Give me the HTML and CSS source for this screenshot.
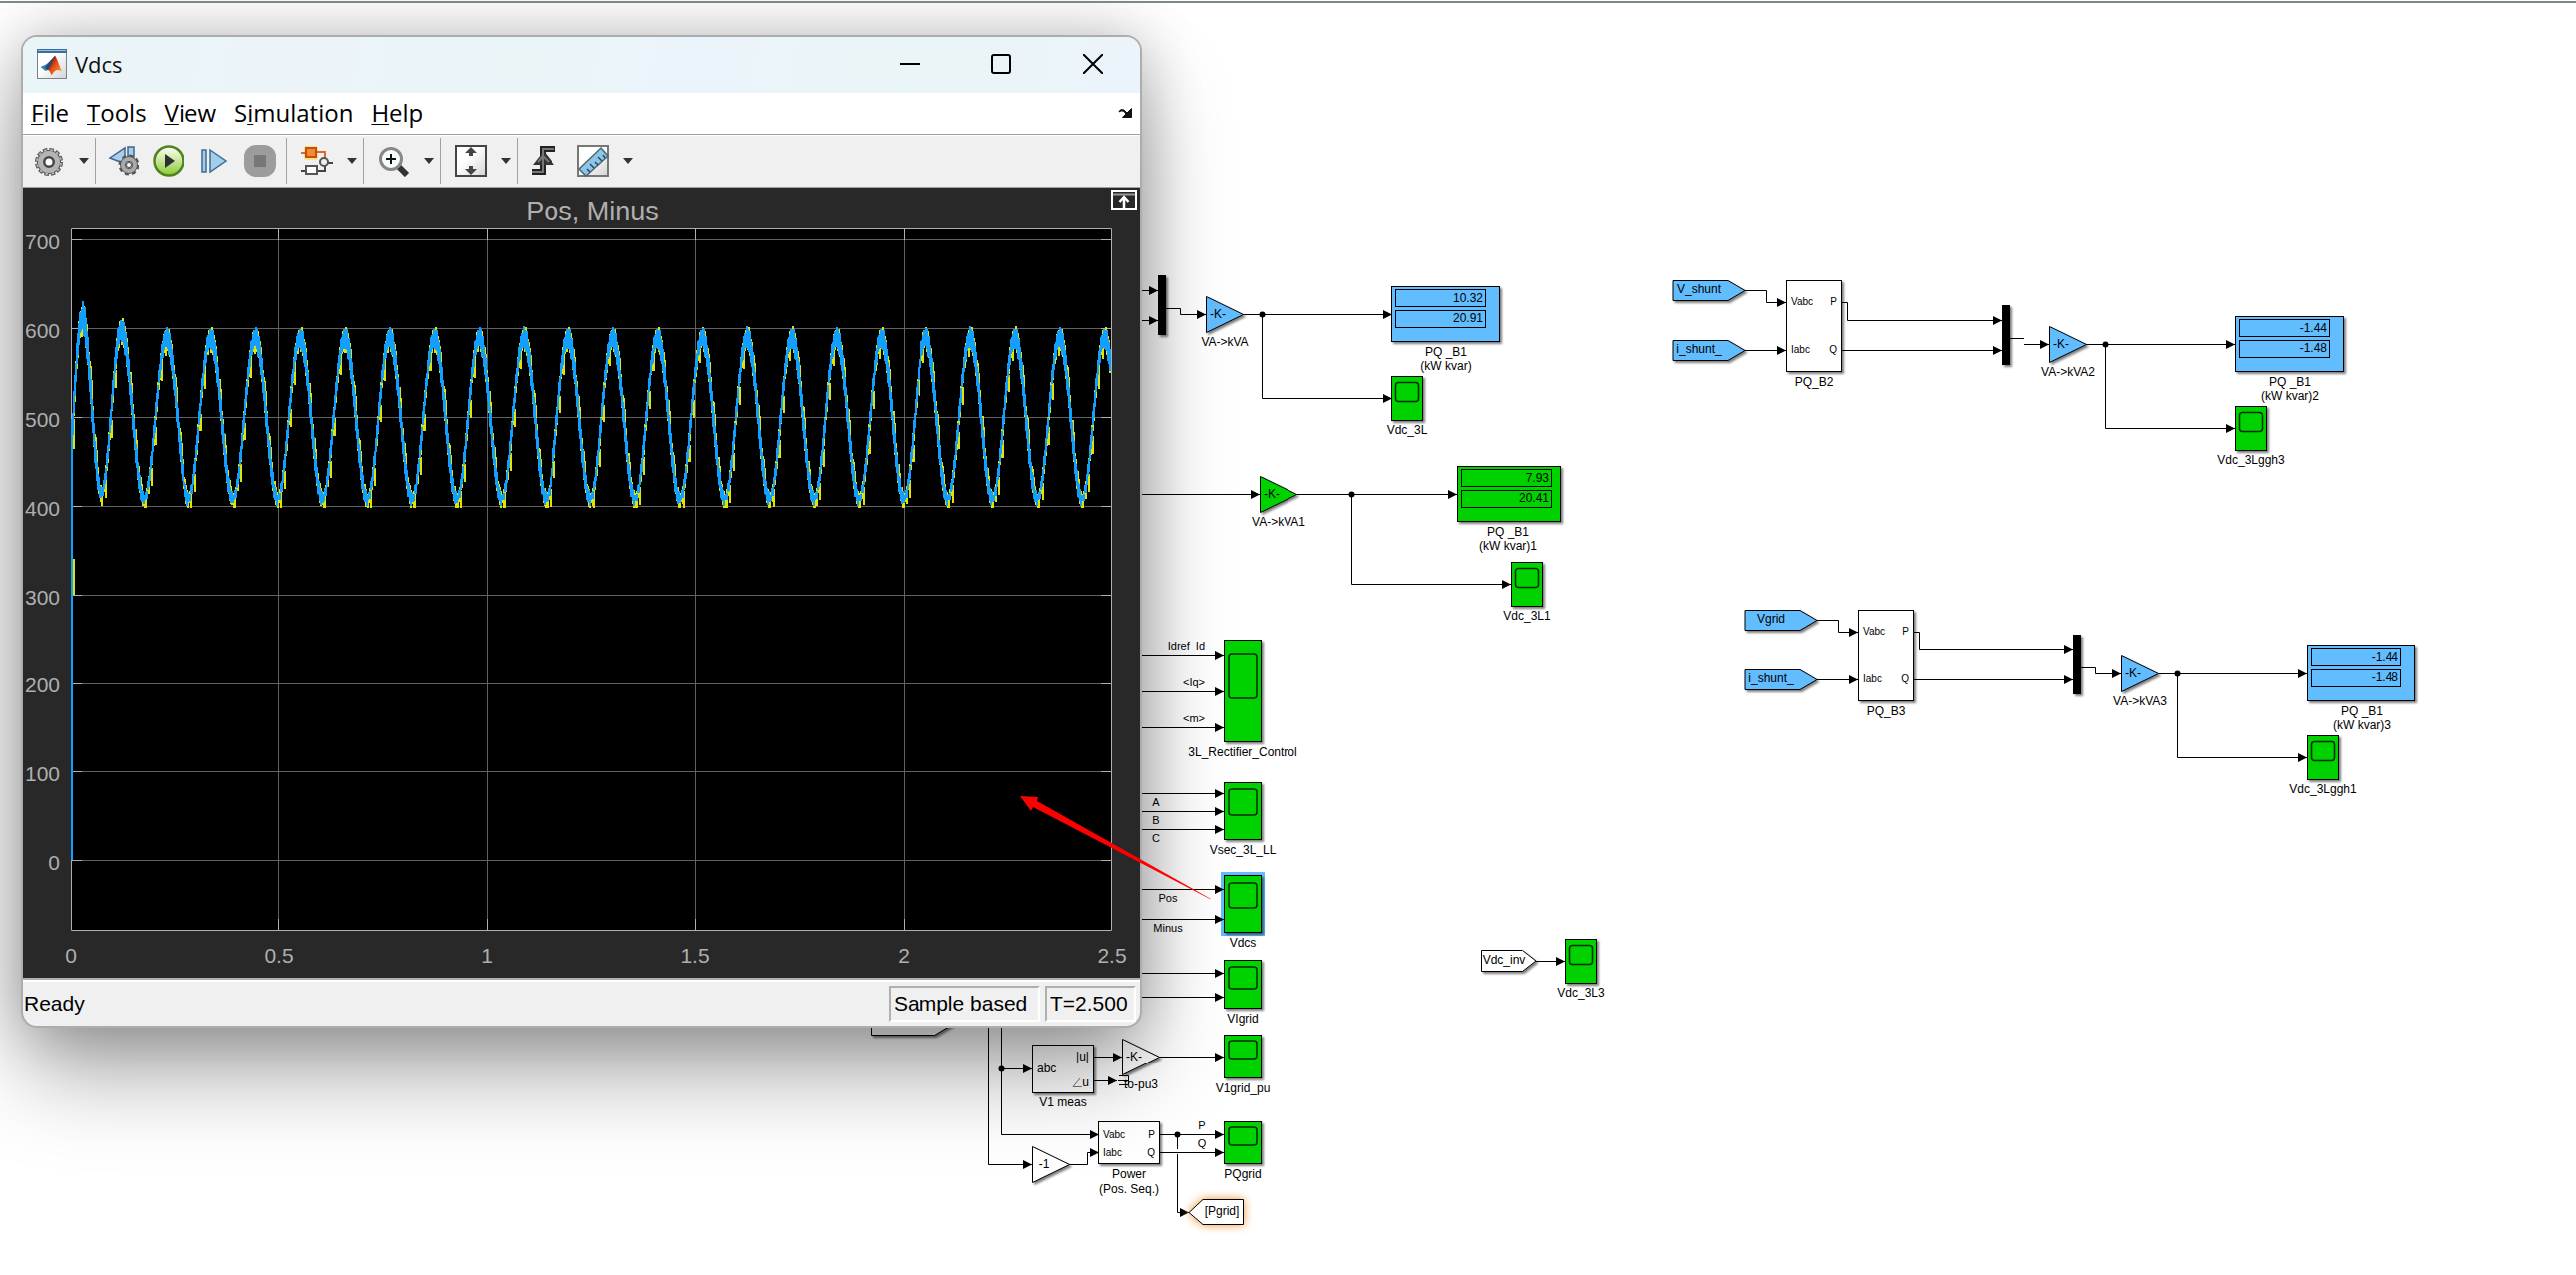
FILE: index.html
```html
<!DOCTYPE html>
<html lang="en">
<head>
<meta charset="utf-8">
<title>Vdcs</title>
<link rel="stylesheet" href="styles.css">
</head>
<body>
<main class="canvas">
<svg class="diagram" aria-label="Block diagram">
  <defs>
    <marker id="arrow" markerUnits="userSpaceOnUse" markerWidth="10" markerHeight="10" refX="9" refY="5" orient="auto"><path d="M0 0.5 9 5 0 9.5Z"/></marker>
    <g id="gain"><path d="M0-18 37 0 0 18Z"/></g>
    <g id="scope"><rect class="green" width="31" height="44"/><rect class="screen" x="4" y="6" width="23" height="19" rx="3"/></g>
    <g id="fields"><rect width="90" height="17"/><rect y="21" width="90" height="17"/></g>
    <g id="mux"><rect width="8" height="60"/></g>
    <g id="tag"><path d="M0-10H55L72 0 55 10H0Z"/></g>
  </defs>

  <!-- PQ_B1 branch -->
  <g class="wires">
    <path d="M1143 291.5H1161"/><path d="M1143 321.5H1161"/>
    <path d="M1169 309.5H1183.5V315.5H1209"/>
    <path d="M1246 315.5H1396"/><path d="M1265.5 315.5V399.5H1396"/>
  </g>
  <circle cx="1265.5" cy="315.5" r="3"/>
  <use class="block black" href="#mux" x="1161" y="276"/>
  <use class="block blue" href="#gain" x="1209.5" y="315.5"/>
  <rect class="block blue" x="1395.5" y="287.5" width="108" height="55"/>
  <use class="fields" href="#fields" x="1399.5" y="290.5"/>
  <use class="block" href="#scope" x="1395.5" y="377.5"/>
  <g class="end"><text x="1487" y="303">10.32</text><text x="1487" y="323">20.91</text></g>
  <g class="mid">
    <text x="1221" y="319">-K-</text><text x="1228" y="347">VA-&gt;kVA</text>
    <text x="1450" y="357">PQ _B1</text><text x="1450" y="371">(kW kvar)</text><text x="1411" y="435">Vdc_3L</text>
  </g>

  <!-- PQ_B1 branch 1 -->
  <g class="wires">
    <path d="M1143 495.5H1263"/><path d="M1300 495.5H1461"/><path d="M1355.5 495.5V585.5H1515"/>
  </g>
  <circle cx="1355.5" cy="495.5" r="3"/>
  <use class="block green" href="#gain" x="1263.5" y="495.5"/>
  <rect class="block green" x="1461.5" y="467.5" width="103" height="55"/>
  <use class="fields" href="#fields" x="1465.5" y="470.5"/>
  <use class="block" href="#scope" x="1515.5" y="563.5"/>
  <g class="end"><text x="1553" y="483">7.93</text><text x="1553" y="503">20.41</text></g>
  <g class="mid">
    <text x="1275" y="499">-K-</text><text x="1282" y="527">VA-&gt;kVA1</text>
    <text x="1512" y="537">PQ _B1</text><text x="1512" y="551">(kW kvar)1</text><text x="1531" y="621">Vdc_3L1</text>
  </g>

  <!-- shunt measurement -->
  <g class="wires">
    <path d="M1750 291.5H1771.5V303.5H1791"/><path d="M1750 351.5H1791"/>
    <path d="M1847 303.5H1852.5V321.5H2007"/><path d="M1847 351.5H2007"/>
    <path d="M2015 339.5H2029.5V345.5H2055"/>
    <path d="M2092 345.5H2241"/><path d="M2111.5 345.5V429.5H2241"/>
  </g>
  <circle cx="2111.5" cy="345.5" r="3"/>
  <use class="block blue" href="#tag" x="1678" y="291.5"/>
  <use class="block blue" href="#tag" x="1678" y="351.5"/>
  <rect class="block white" x="1791.5" y="281.5" width="55" height="91"/>
  <use class="block black" href="#mux" x="2007" y="306"/>
  <use class="block blue" href="#gain" x="2055.5" y="345.5"/>
  <rect class="block blue" x="2241.5" y="317.5" width="108" height="55"/>
  <use class="fields" href="#fields" x="2245.5" y="320.5"/>
  <use class="block" href="#scope" x="2241.5" y="407.5"/>
  <g class="port"><text x="1796" y="306">Vabc</text><text x="1796" y="354">Iabc</text></g>
  <g class="port end"><text x="1842" y="306">P</text><text x="1842" y="354">Q</text></g>
  <g class="end"><text x="2333" y="333">-1.44</text><text x="2333" y="353">-1.48</text></g>
  <g class="mid">
    <text x="1704" y="294">V_shunt</text><text x="1704" y="354">i_shunt_</text>
    <text x="1819" y="387">PQ_B2</text><text x="2067" y="349">-K-</text><text x="2074" y="377">VA-&gt;kVA2</text>
    <text x="2296" y="387">PQ _B1</text><text x="2296" y="401">(kW kvar)2</text><text x="2257" y="465">Vdc_3Lggh3</text>
  </g>

  <!-- grid measurement -->
  <g transform="translate(72 330)">
    <g class="wires">
      <path d="M1750 291.5H1771.5V303.5H1791"/><path d="M1750 351.5H1791"/>
      <path d="M1847 303.5H1852.5V321.5H2007"/><path d="M1847 351.5H2007"/>
      <path d="M2015 339.5H2029.5V345.5H2055"/>
      <path d="M2092 345.5H2241"/><path d="M2111.5 345.5V429.5H2241"/>
    </g>
    <circle cx="2111.5" cy="345.5" r="3"/>
    <use class="block blue" href="#tag" x="1678" y="291.5"/>
    <use class="block blue" href="#tag" x="1678" y="351.5"/>
    <rect class="block white" x="1791.5" y="281.5" width="55" height="91"/>
    <use class="block black" href="#mux" x="2007" y="306"/>
    <use class="block blue" href="#gain" x="2055.5" y="345.5"/>
    <rect class="block blue" x="2241.5" y="317.5" width="108" height="55"/>
    <use class="fields" href="#fields" x="2245.5" y="320.5"/>
    <use class="block" href="#scope" x="2241.5" y="407.5"/>
    <g class="port"><text x="1796" y="306">Vabc</text><text x="1796" y="354">Iabc</text></g>
    <g class="port end"><text x="1842" y="306">P</text><text x="1842" y="354">Q</text></g>
    <g class="end"><text x="2333" y="333">-1.44</text><text x="2333" y="353">-1.48</text></g>
    <g class="mid">
      <text x="1704" y="294">Vgrid</text><text x="1704" y="354">i_shunt_</text>
      <text x="1819" y="387">PQ_B3</text><text x="2067" y="349">-K-</text><text x="2074" y="377">VA-&gt;kVA3</text>
      <text x="2296" y="387">PQ _B1</text><text x="2296" y="401">(kW kvar)3</text><text x="2257" y="465">Vdc_3Lggh1</text>
    </g>
  </g>

  <!-- inverter voltage -->
  <g class="wires"><path d="M1540 963.5H1569"/></g>
  <path class="block white" d="M1485.5 952.5H1526.5L1540 963 1526.5 973.5H1485.5Z"/>
  <use class="block" href="#scope" x="1569.5" y="941.5"/>
  <g class="mid"><text x="1508" y="966">Vdc_inv</text><text x="1585" y="999">Vdc_3L3</text></g>

  <!-- scope column -->
  <g class="wires">
    <path d="M1143 657.5H1227"/><path d="M1143 693.5H1227"/><path d="M1143 729.5H1227"/>
    <path d="M1143 795.5H1227"/><path d="M1143 813.5H1227"/><path d="M1143 831.5H1227"/>
  </g>
  <rect class="halo" x="1224" y="874" width="44" height="64"/>
  <g class="wires">
    <path d="M1143 891.5H1227"/><path d="M1143 921.5H1227"/>
    <path d="M1143 975.5H1227"/><path d="M1143 999.5H1227"/>
    <path d="M1162 1059.5H1227"/><path d="M1162 1137.5H1227"/><path d="M1162 1155.5H1227"/>
  </g>
  <g class="block">
    <g class="green">
      <rect x="1227.5" y="642.5" width="37" height="101"/><rect x="1227.5" y="784.5" width="37" height="57"/>
      <rect x="1227.5" y="877.5" width="37" height="57"/><rect x="1227.5" y="962.5" width="37" height="48"/>
      <rect x="1227.5" y="1037.5" width="37" height="43"/><rect x="1227.5" y="1124.5" width="37" height="42"/>
    </g>
    <g class="screen">
      <rect x="1232" y="656" width="28" height="44" rx="3"/><rect x="1232" y="791" width="28" height="26" rx="3"/>
      <rect x="1232" y="885" width="28" height="25" rx="3"/><rect x="1232" y="969" width="28" height="22" rx="3"/>
      <rect x="1232" y="1043" width="28" height="18" rx="3"/><rect x="1232" y="1130" width="28" height="18" rx="3"/>
    </g>
  </g>
  <g class="mid">
    <text x="1246" y="758">3L_Rectifier_Control</text><text x="1246" y="856">Vsec_3L_LL</text><text x="1246" y="949">Vdcs</text>
    <text x="1246" y="1025">VIgrid</text><text x="1246" y="1095">V1grid_pu</text><text x="1246" y="1181">PQgrid</text>
  </g>
  <g class="signal end"><text x="1208" y="652" xml:space="preserve">Idref  Id</text><text x="1208" y="688">&lt;Iq&gt;</text><text x="1208" y="724">&lt;m&gt;</text></g>
  <g class="signal mid">
    <text x="1159" y="808">A</text><text x="1159" y="826">B</text><text x="1159" y="844">C</text>
    <text x="1171" y="904">Pos</text><text x="1171" y="934">Minus</text><text x="1205" y="1132">P</text><text x="1205" y="1150">Q</text>
  </g>

  <!-- grid power chain -->
  <g class="wires">
    <path d="M1004.5 1028V1137.5H1102"/><path d="M991.5 1028V1167.5H1035"/><path d="M1004.5 1071.5H1035"/>
    <path d="M1097 1059.5H1125"/><path d="M1097 1083.5H1120"/>
    <path d="M1072 1167.5H1090.5V1155.5H1102"/>
    <path d="M1180.5 1157V1215.5H1192"/>
  </g>
  <path class="line" d="M1180.5 1137.5V1152M1121 1083.5H1131.5M1122 1078.5H1131.5V1087.5H1122M904 1028.5H911"/>
  <circle cx="1004.5" cy="1071.5" r="3"/><circle cx="1180.5" cy="1137.5" r="3"/>
  <path class="block white" d="M873.5 1013.5H937.5L960 1024 937.5 1037.5H873.5Z"/>
  <rect class="block white" x="1035.5" y="1047.5" width="61" height="48"/>
  <rect class="block white" x="1101.5" y="1124.5" width="61" height="42"/>
  <use class="block white" href="#gain" x="1125.5" y="1059.5"/>
  <use class="block white" href="#gain" x="1035.5" y="1167.5"/>
  <path class="glow white" d="M1192 1215.5 1206 1202.5H1246.5V1227.5H1206Z"/>
  <text x="1040" y="1075">abc</text>
  <g class="end"><text x="1092" y="1063">|u|</text><text x="1092" y="1089">u</text></g>
  <path class="angle" d="M1083 1081 1076 1089.5H1085"/>
  <g class="port"><text x="1106" y="1141">Vabc</text><text x="1106" y="1159">Iabc</text></g>
  <g class="port end"><text x="1158" y="1141">P</text><text x="1158" y="1159">Q</text></g>
  <g class="mid">
    <text x="1137" y="1063">-K-</text><text x="1144" y="1091">to-pu3</text><text x="1066" y="1109">V1 meas</text><text x="1047" y="1171">-1</text>
    <text x="1132" y="1181">Power</text><text x="1132" y="1196">(Pos. Seq.)</text><text x="1225" y="1218">[Pgrid]</text>
  </g>
</svg>

<section class="window" aria-label="Vdcs">
  <header class="titlebar">
    <svg class="logo" viewBox="0 0 30 30" aria-hidden="true">
      <defs><linearGradient id="paper" x2="1" y2="1"><stop offset=".4" stop-color="#fff"/><stop offset="1" stop-color="#d4d4d6"/></linearGradient>
      <linearGradient id="flame" x2="1" y2="1"><stop offset=".2" stop-color="#7c1b14"/><stop offset=".5" stop-color="#e5501b"/><stop offset="1" stop-color="#f9b32a"/></linearGradient></defs>
      <rect x=".5" y=".5" width="29" height="29" fill="url(#paper)" stroke="#7c8186"/>
      <rect width="30" height="4" fill="#3c6c9c"/><rect x="1" y="1" width="28" height="1" fill="#8fc1e3"/>
      <path d="M3.500 18 9 15.500 13 12.500 18 7 15 16 11.500 20.500 8.500 22Z" fill="#3d7fb5"/>
      <path d="M8 18.500 13 12 18 7 14 19 11 21.500Z" fill="#29486b"/>
      <path d="M18 6.500C20 9 22 16 25 22.500 21 20 18 20.500 14.500 26.500 13.500 23.500 12.500 21.500 11 20.500 14.500 17 15.500 9 18 6.500Z" fill="url(#flame)"/>
    </svg>
    <h1 class="title">Vdcs</h1>
    <button class="winbtn" aria-label="Minimize"><svg width="20" height="20"><path d="M0 10H20"/></svg></button>
    <button class="winbtn" aria-label="Maximize"><svg width="20" height="20"><rect x="1" y="1" width="18" height="18" rx="2"/></svg></button>
    <button class="winbtn" aria-label="Close"><svg width="20" height="20"><path d="M0 0 20 20M20 0 0 20"/></svg></button>
  </header>
  <nav class="menubar">
    <button><u>F</u>ile</button><button><u>T</u>ools</button><button><u>V</u>iew</button><button>S<u>i</u>mulation</button><button><u>H</u>elp</button>
    <button class="dock" aria-label="Dock"><svg width="16" height="12"><path d="M1 5C2 2 5 2 7 4L9 6 13.500 1.500V10.500H4.500L8 7C6 4 4 3 1 5Z" fill="#111" stroke="#111"/></svg></button>
  </nav>
  <div class="toolbar" role="toolbar">
    <div class="group first">
      <button class="tool" aria-label="Configuration"><svg width="32" height="32" viewBox="0 0 32 32"><g fill="none"><circle cx="16" cy="17" r="12.500" stroke="#555" stroke-width="3" stroke-dasharray="4.500 2.045"/><circle cx="16" cy="17" r="8.500" stroke="#555" stroke-width="7"/><circle cx="16" cy="17" r="12" stroke="#b5b5b5" stroke-width="2" stroke-dasharray="2.500 3.783" stroke-dashoffset="-1"/><circle cx="16" cy="17" r="8.500" stroke="#b5b5b5" stroke-width="5"/></g><circle cx="16" cy="17" r="4.500" fill="#fff" stroke="#444" stroke-width="2"/></svg></button>
      <button class="drop" aria-label="Configuration options"><i></i></button>
    </div>
    <div class="group sim">
      <button class="tool" aria-label="Step back"><svg width="32" height="32" viewBox="0 0 32 32"><path d="M18 3V19L3 13ZM21 2H27V18H21Z" fill="#a9cdec" stroke="#3b658c" stroke-width="1.500"/><circle cx="22" cy="20" r="9" fill="none" stroke="#555" stroke-width="3" stroke-dasharray="4 3.070"/><circle cx="22" cy="20" r="6" fill="#eee" stroke="#555" stroke-width="6"/><circle cx="22" cy="20" r="6" fill="none" stroke="#aaa" stroke-width="4"/><circle cx="22" cy="20" r="2.500" fill="#fff" stroke="#444"/></svg></button>
      <button class="tool" aria-label="Run"><svg width="32" height="32" viewBox="0 0 32 32"><defs><linearGradient id="run" x2="0" y2="1"><stop offset=".1" stop-color="#f5fbe6"/><stop offset="1" stop-color="#8acb31"/></linearGradient></defs><circle cx="16" cy="16" r="14.500" fill="url(#run)" stroke="#4e8420" stroke-width="2.500"/><path d="M12 9 22 16 12 23Z" fill="#2c3136"/></svg></button>
      <button class="tool" aria-label="Step forward"><svg width="32" height="32" viewBox="0 0 32 32"><path d="M4 5H8V27H4ZM12 5 28 16 12 27Z" fill="#a4cdea" stroke="#3c6c97" stroke-width="1.500"/></svg></button>
      <button class="tool" aria-label="Stop" disabled><svg width="32" height="32" viewBox="0 0 32 32"><rect width="32" height="32" rx="12" fill="#9c9c9c"/><rect x="10" y="10" width="12" height="12" fill="#777"/></svg></button>
    </div>
    <div class="group">
      <button class="tool" aria-label="Highlight block"><svg width="32" height="32" viewBox="0 0 32 32"><rect x="3" y="1" width="14" height="14" rx="2" fill="#fde08a"/><path d="M0 8H4M16 7H24V14" fill="none" stroke="#df6a1b" stroke-width="2"/><rect x="5" y="3" width="10" height="9" fill="#f58a33" stroke="#b9521a" stroke-width="2"/><path d="M0 26H5M16 26H24V20M27 18H32" fill="none" stroke="#444" stroke-width="2"/><circle cx="23" cy="17" r="4" fill="#eee" stroke="#555" stroke-width="2"/><rect x="5" y="21" width="11" height="8" fill="#fff" stroke="#555" stroke-width="2"/></svg></button>
      <button class="drop" aria-label="Highlight options"><i></i></button>
    </div>
    <div class="group">
      <button class="tool" aria-label="Zoom in"><svg width="32" height="32" viewBox="0 0 32 32"><path d="M19 20 29 30" stroke="#333" stroke-width="6"/><circle cx="13" cy="14" r="10.500" fill="#f7fcfd" stroke="#888" stroke-width="3"/><path d="M8 14H18M13 9V19" stroke="#111" stroke-width="2"/></svg></button>
      <button class="drop" aria-label="Zoom options"><i></i></button>
    </div>
    <div class="group">
      <button class="tool" aria-label="Fit to view"><svg width="32" height="32" viewBox="0 0 32 32"><rect x="1" y="1" width="30" height="30" fill="url(#paper)" stroke="#444" stroke-width="2"/><path d="M16 2 22 8H18V11H14V8H10ZM16 30 22 24H18V21H14V24H10Z" fill="#444"/></svg></button>
      <button class="drop" aria-label="Fit options"><i></i></button>
    </div>
    <div class="group last">
      <button class="tool" aria-label="Triggers"><svg width="32" height="32" viewBox="0 0 32 32"><path d="M4 27H15V4H28" fill="none" stroke="#222" stroke-width="6"/><path d="M16 6 27 20H5Z" fill="#333"/><path d="M4 27H15V4H27M10 17 15 11 21 17" fill="none" stroke="#777" stroke-width="2"/></svg></button>
      <button class="tool" aria-label="Cursor measurements"><svg width="32" height="32" viewBox="0 0 32 32"><rect x="1" y="1" width="30" height="30" fill="url(#paper)" stroke="#777" stroke-width="2"/><path d="M2 24 24 3 31 11 9 31Z" fill="#8ec5e6" stroke="#4b6675" stroke-width="1.500"/><path d="M13 27 10 24M17 23 13 19M21 20 18 17M25 16 21 12M28 13 26 10" stroke="#234b68" stroke-width="1.500"/></svg></button>
      <button class="drop" aria-label="Measurement options"><i></i></button>
    </div>
  </div>
  <div class="scopeview">
    <svg class="plot" viewBox="23 188 1120 792" aria-label="Pos, Minus plot">
      <rect x="71" y="229" width="1044" height="704" fill="#000"/>
      <path class="grid" d="M71 240.500H1114M71 329.500H1114M71 418.500H1114M71 507.500H1114M71 596.500H1114M71 685.500H1114M71 773.500H1114M71 862.500H1114M279.500 229V932M488.500 229V932M697.500 229V932M906.500 229V932"/>
      <path class="axis" d="M71.500 229.500H1114.500V932.500H71.500ZM71 240.500h11M71 329.500h11M71 418.500h11M71 507.500h11M71 596.500h11M71 685.500h11M71 773.500h11M71 862.500h11M1114 240.500h-10M1114 329.500h-10M1114 418.500h-10M1114 507.500h-10M1114 596.500h-10M1114 685.500h-10M1114 773.500h-10M1114 862.500h-10M279.500 229v12M488.500 229v12M697.500 229v12M906.500 229v12M279.500 932v-11M488.500 932v-11M697.500 932v-11M906.500 932v-11"/>
      <path id="pos" class="trace pos"/>
      <path id="minus" class="trace minus"/>
      <text class="heading mid" x="594" y="221">Pos, Minus</text>
      <g class="end">
        <text x="60" y="250">700</text><text x="60" y="339">600</text><text x="60" y="428">500</text><text x="60" y="517">400</text>
        <text x="60" y="606">300</text><text x="60" y="694">200</text><text x="60" y="783">100</text><text x="60" y="872">0</text>
      </g>
      <g class="mid">
        <text x="71" y="965">0</text><text x="280" y="965">0.5</text><text x="488" y="965">1</text>
        <text x="697" y="965">1.5</text><text x="906" y="965">2</text><text x="1115" y="965">2.5</text>
      </g>
    </svg>
    <button class="expand" aria-label="Maximize axes"><svg width="26" height="20"><rect x="1" y="1" width="24" height="18" fill="#282828" stroke="#fff" stroke-width="2"/><path d="M2 4.500H24" stroke="#999" stroke-width="2"/><path d="M13 18V9M8.500 12 13 7 17.500 12" fill="none" stroke="#fff" stroke-width="2.500"/></svg></button>
  </div>
  <footer class="status"><span class="ready">Ready</span><span class="cell mode">Sample based</span><span class="cell time">T=2.500</span></footer>
</section>

<svg class="pointer" aria-hidden="true"><path d="M1023 798 1041 799 1040 803 1214 901 1213 901 1036 809 1034 813Z"/></svg>
</main>
<script src="plot.js"></script>
</body>
</html>
```
FILE: styles.css
```css
* { box-sizing: border-box; }
body { margin: 0; background: #fff; font-family: "Liberation Sans", Arial, sans-serif; }
button { margin: 0; padding: 0; border: 0; background: none; color: inherit; font: inherit; }
.canvas { position: relative; min-height: 100vh; overflow: hidden; }
.canvas::before { content: ""; position: absolute; z-index: 2; top: 1px; left: 0; right: 0; height: 2px; background: #7e888c; }

.diagram, .pointer { position: absolute; inset: 0; width: 100%; height: 100%; }
.pointer { fill: #f00; pointer-events: none; }
.diagram text { font-size: 12px; fill: #000; }
.diagram .port text { font-size: 10px; }
.diagram .signal text { font-size: 11px; }
.mid { text-anchor: middle; }
.end { text-anchor: end; }
.wires path { fill: none; stroke: #000; marker-end: url(#arrow); }
.line, .angle { fill: none; stroke: #000; }
.angle { stroke: #777; }
.block { stroke: #000; filter: drop-shadow(2px 2px 1px rgba(0, 0, 0, .5)); }
.blue { fill: #62bdff; }
.green { fill: #00d200; }
.white { fill: #fff; }
.black { fill: #000; stroke: none; }
.fields { fill: none; stroke: #000; }
.screen { fill: none; stroke: #002800; stroke-width: 1.5px; }
.halo { fill: #62bdff; }
.glow { stroke: #000; filter: drop-shadow(0 0 5px #f0912d); }

.window { position: absolute; top: 35px; left: 21px; width: 1124px; display: flex; flex-direction: column; overflow: visible; border: 2px solid #adadad; border-radius: 16px; background: #f0f0f0; box-shadow: 0 0 60px rgba(0, 0, 0, .24), 0 50px 90px -4px rgba(0, 0, 0, .34); }
.titlebar { display: flex; align-items: center; height: 56px; padding: 0 1px 2px 14px; border-radius: 14px 14px 0 0; background: linear-gradient(100deg, #eaf5f7, #ecf4fa 25%, #eaf5f8 45%, #ecf4fb 60%, #eaf5f7 80%, #ecf4fb); }
.logo { width: 30px; height: 30px; }
.title { flex: 1; margin: 0; padding-left: 8px; font: 22px "Open Sans", sans-serif; color: #111; }
.winbtn { display: flex; align-items: center; justify-content: center; width: 92px; height: 54px; }
.winbtn svg { fill: none; stroke: #000; stroke-width: 2px; }
.menubar { display: flex; align-items: center; gap: 18px; height: 42px; padding: 0 6px 2px 8px; border-bottom: 1px solid #a0a0a0; background: #fff; font: 24px "Open Sans", sans-serif; color: #000; }
.menubar u { text-decoration-thickness: 1px; text-underline-offset: 2px; }
.dock { margin-left: auto; display: flex; }
.toolbar { display: flex; align-items: center; height: 53px; padding: 0 0 2px 3px; border-top: 1px solid #fff; border-bottom: 1px solid #a0a0a0; background: #f0f0f0; }
.group { display: flex; align-items: center; height: 46px; padding-left: 7px; border-right: 1px solid #a0a0a0; }
.first { padding-left: 0; }
.sim { padding: 0 3px 0 4px; }
.last { padding-left: 3px; gap: 4px; border-right: 0; }
.last .drop { margin-left: -4px; }
.tool { display: flex; align-items: center; justify-content: center; width: 46px; height: 46px; }
.drop { display: flex; align-items: center; justify-content: center; width: 23px; height: 46px; }
.drop i { border: 5px solid transparent; border-top: 6px solid #333; border-bottom: 0; }
.scopeview { position: relative; background: #282828; border-bottom: 2px solid #b0b0b0; }
.plot { display: block; width: 100%; }
.plot text { font-size: 21px; fill: #afafaf; }
.plot .heading { font-size: 27px; }
.grid { fill: none; stroke: #606060; }
.axis { fill: none; stroke: #afafaf; }
.trace { fill: none; stroke-width: 2px; shape-rendering: crispEdges; }
.pos { stroke: #e3e300; }
.minus { stroke: #139fff; }
.expand { position: absolute; top: 2px; right: 3px; display: flex; }
.status { display: flex; align-items: center; gap: 5px; height: 46px; padding: 0 4px 0 1px; border-top: 2px solid #fff; border-radius: 0 0 14px 14px; font-size: 21px; color: #000; }
.ready { flex: 1; }
.cell { height: 36px; padding-left: 3px; border: 2px solid; border-color: #b0b0b0 #fff #fff #b0b0b0; line-height: 32px; white-space: nowrap; }
.mode { width: 152px; }
.time { width: 91px; }
```
FILE: plot.js
```js
// Each trace is drawn as min/max columns, as a dense signal is on a scope.
(function () {
  var left = 72, right = 1113, period = 44.8;
  function volts(x) {
    if (x < 83) return 480 + 132 * Math.sin((x - 73) / 10 * Math.PI / 2);
    if (x < 102) return 513 + 99 * Math.cos((x - 83) / 19 * Math.PI);
    if (x < 122) return 506 - 92 * Math.cos((x - 102) / 20 * Math.PI);
    if (x < 145) return 502 + 96 * Math.cos((x - 122) / 23 * Math.PI);
    return 498 + 91 * Math.cos((x - 167.3) / period * 2 * Math.PI);
  }
  function toY(v) { return Math.round(862 - v * 0.889); }
  function trace(start, shift, offset) {
    var d = start;
    for (var x = left; x <= right; x += 1) {
      var v0 = volts(x + shift), v1 = volts(x + 1 + shift);
      var crest = Math.max(0, (v0 - 540) / 10);
      var ripple = 2 + crest + (v1 < v0 ? 3 : 0);
      var wobble = 3 * Math.sin(x * 2.3 + offset);
      var hi = Math.max(v0, v1) + ripple + wobble;
      var lo = Math.min(v0, v1) - ripple + wobble;
      d += "M" + x + " " + toY(hi) + "V" + toY(lo);
    }
    return d;
  }
  // The first trace shows through on short stretches beside the second one.
  function beside() {
    var d = "M74 420V450M74 560V596M72 740V770";
    for (var x = left + 4; x < right; x += 1) {
      var v = volts(x), falling = volts(x + 1) < v;
      if (x % 5 > 1) continue;
      var side = falling ? 1 : (x % 2 ? 1 : -1);
      d += "M" + (x + side) + " " + toY(v + 4) + "V" + toY(Math.max(v - 16, 397));
    }
    return d;
  }
  document.getElementById("pos").setAttribute("d", beside() + trace("", 0, 2));
  document.getElementById("minus").setAttribute("d", trace("M72 420V862M83 302V330M85 308V330", 0.2, 0));
})();
```
